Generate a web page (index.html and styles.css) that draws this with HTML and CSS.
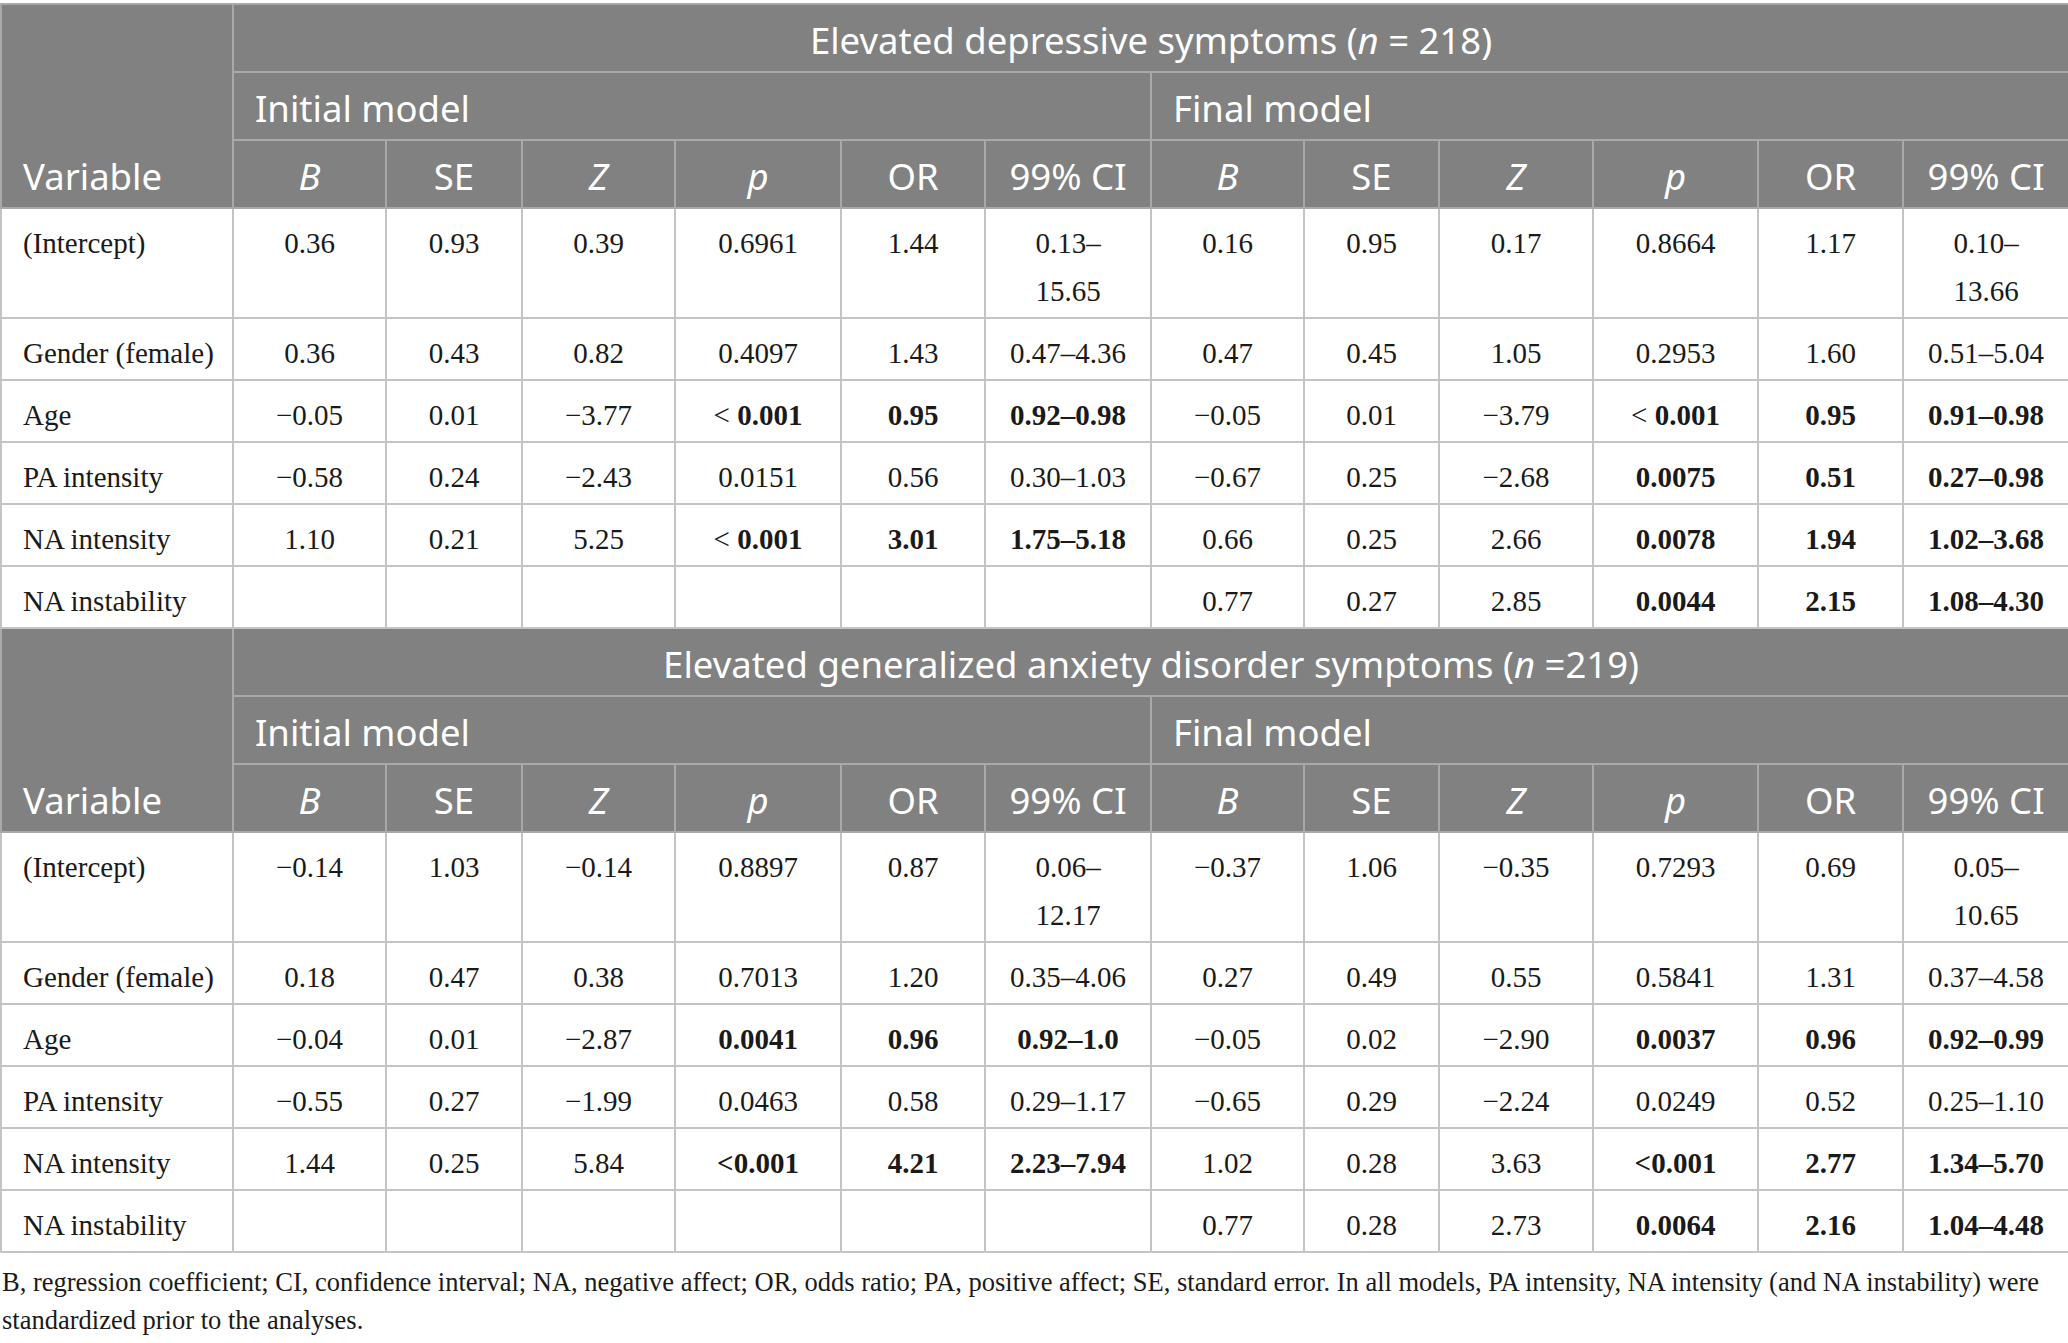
FILE: index.html
```html
<!DOCTYPE html>
<html lang="en">
<head>
<meta charset="utf-8">
<title>Table</title>
<link rel="stylesheet" href="styles.css">
</head>
<body>
<table class="t">
<colgroup>
<col style="width:232px"><col style="width:153px"><col style="width:136px"><col style="width:153px"><col style="width:166px"><col style="width:144px"><col style="width:166px"><col style="width:153px"><col style="width:135px"><col style="width:154px"><col style="width:165px"><col style="width:145px"><col style="width:166px">
</colgroup>
<tbody>
<tr class="hr">
<th class="h var" rowspan="3">Variable</th>
<th class="h title" colspan="12">Elevated depressive symptoms (<i>n</i> = 218)</th>
</tr>
<tr class="hr">
<th class="h model" colspan="6">Initial model</th>
<th class="h model" colspan="6">Final model</th>
</tr>
<tr class="hr">
<th class="h c"><i>B</i></th><th class="h c">SE</th><th class="h c"><i>Z</i></th><th class="h c"><i>p</i></th><th class="h c">OR</th><th class="h c">99% CI</th>
<th class="h c"><i>B</i></th><th class="h c">SE</th><th class="h c"><i>Z</i></th><th class="h c"><i>p</i></th><th class="h c">OR</th><th class="h c">99% CI</th>
</tr>
<tr>
<td class="v">(Intercept)</td><td>0.36</td><td>0.93</td><td>0.39</td><td>0.6961</td><td>1.44</td><td>0.13–<br>15.65</td>
<td>0.16</td><td>0.95</td><td>0.17</td><td>0.8664</td><td>1.17</td><td>0.10–<br>13.66</td>
</tr>
<tr>
<td class="v">Gender (female)</td><td>0.36</td><td>0.43</td><td>0.82</td><td>0.4097</td><td>1.43</td><td>0.47–4.36</td>
<td>0.47</td><td>0.45</td><td>1.05</td><td>0.2953</td><td>1.60</td><td>0.51–5.04</td>
</tr>
<tr>
<td class="v">Age</td><td>−0.05</td><td>0.01</td><td>−3.77</td><td>&lt; <b>0.001</b></td><td><b>0.95</b></td><td><b>0.92–0.98</b></td>
<td>−0.05</td><td>0.01</td><td>−3.79</td><td>&lt; <b>0.001</b></td><td><b>0.95</b></td><td><b>0.91–0.98</b></td>
</tr>
<tr>
<td class="v">PA intensity</td><td>−0.58</td><td>0.24</td><td>−2.43</td><td>0.0151</td><td>0.56</td><td>0.30–1.03</td>
<td>−0.67</td><td>0.25</td><td>−2.68</td><td><b>0.0075</b></td><td><b>0.51</b></td><td><b>0.27–0.98</b></td>
</tr>
<tr>
<td class="v">NA intensity</td><td>1.10</td><td>0.21</td><td>5.25</td><td>&lt; <b>0.001</b></td><td><b>3.01</b></td><td><b>1.75–5.18</b></td>
<td>0.66</td><td>0.25</td><td>2.66</td><td><b>0.0078</b></td><td><b>1.94</b></td><td><b>1.02–3.68</b></td>
</tr>
<tr>
<td class="v">NA instability</td><td></td><td></td><td></td><td></td><td></td><td></td>
<td>0.77</td><td>0.27</td><td>2.85</td><td><b>0.0044</b></td><td><b>2.15</b></td><td><b>1.08–4.30</b></td>
</tr>
<tr class="hr">
<th class="h var" rowspan="3">Variable</th>
<th class="h title" colspan="12">Elevated generalized anxiety disorder symptoms (<i>n</i> =219)</th>
</tr>
<tr class="hr">
<th class="h model" colspan="6">Initial model</th>
<th class="h model" colspan="6">Final model</th>
</tr>
<tr class="hr">
<th class="h c"><i>B</i></th><th class="h c">SE</th><th class="h c"><i>Z</i></th><th class="h c"><i>p</i></th><th class="h c">OR</th><th class="h c">99% CI</th>
<th class="h c"><i>B</i></th><th class="h c">SE</th><th class="h c"><i>Z</i></th><th class="h c"><i>p</i></th><th class="h c">OR</th><th class="h c">99% CI</th>
</tr>
<tr>
<td class="v">(Intercept)</td><td>−0.14</td><td>1.03</td><td>−0.14</td><td>0.8897</td><td>0.87</td><td>0.06–<br>12.17</td>
<td>−0.37</td><td>1.06</td><td>−0.35</td><td>0.7293</td><td>0.69</td><td>0.05–<br>10.65</td>
</tr>
<tr>
<td class="v">Gender (female)</td><td>0.18</td><td>0.47</td><td>0.38</td><td>0.7013</td><td>1.20</td><td>0.35–4.06</td>
<td>0.27</td><td>0.49</td><td>0.55</td><td>0.5841</td><td>1.31</td><td>0.37–4.58</td>
</tr>
<tr>
<td class="v">Age</td><td>−0.04</td><td>0.01</td><td>−2.87</td><td><b>0.0041</b></td><td><b>0.96</b></td><td><b>0.92–1.0</b></td>
<td>−0.05</td><td>0.02</td><td>−2.90</td><td><b>0.0037</b></td><td><b>0.96</b></td><td><b>0.92–0.99</b></td>
</tr>
<tr>
<td class="v">PA intensity</td><td>−0.55</td><td>0.27</td><td>−1.99</td><td>0.0463</td><td>0.58</td><td>0.29–1.17</td>
<td>−0.65</td><td>0.29</td><td>−2.24</td><td>0.0249</td><td>0.52</td><td>0.25–1.10</td>
</tr>
<tr>
<td class="v">NA intensity</td><td>1.44</td><td>0.25</td><td>5.84</td><td><b>&lt;0.001</b></td><td><b>4.21</b></td><td><b>2.23–7.94</b></td>
<td>1.02</td><td>0.28</td><td>3.63</td><td><b>&lt;0.001</b></td><td><b>2.77</b></td><td><b>1.34–5.70</b></td>
</tr>
<tr>
<td class="v">NA instability</td><td></td><td></td><td></td><td></td><td></td><td></td>
<td>0.77</td><td>0.28</td><td>2.73</td><td><b>0.0064</b></td><td><b>2.16</b></td><td><b>1.04–4.48</b></td>
</tr>
</tbody>
</table>
<p class="note">B, regression coefficient; CI, confidence interval; NA, negative affect; OR, odds ratio; PA, positive affect; SE, standard error. In all models, PA intensity, NA intensity (and NA instability) were standardized prior to the analyses.</p>
</body>
</html>
```
FILE: styles.css
```css
html, body {
  margin: 0;
  padding: 0;
  background: #ffffff;
}
body {
  padding-top: 3px;
  width: 2068px;
}
.t {
  border-collapse: collapse;
  table-layout: fixed;
  width: 2068px;
}
.t td, .t th {
  border: 2px solid #c4c4c4;
  white-space: nowrap;
  overflow: hidden;
}
.t th.h {
  background: #808180;
  color: #ffffff;
  font-family: "Noto Sans", "Open Sans", sans-serif;
  font-size: 36.5px;
  font-weight: 400;
  line-height: 48px;
  padding: 11px 21px 7px;
  border-color: #a8a9a8;
  text-align: left;
  vertical-align: middle;
}
.t th.h i {
  font-style: italic;
}
.t th.var {
  vertical-align: bottom;
}
.t th.title {
  text-align: center;
  padding-left: 0;
  padding-right: 0;
}
.t th.c {
  text-align: center;
  padding-left: 4px;
  padding-right: 4px;
}
.t td {
  font-family: "Liberation Serif", "Times New Roman", serif;
  font-size: 29px;
  line-height: 48px;
  color: #1a1a1a;
  padding: 10px 4px 2px;
  text-align: center;
  vertical-align: top;
}
.t td.v {
  text-align: left;
  padding-left: 21px;
}
.t td b {
  font-weight: 700;
}
.note {
  margin: 10px 0 0 2px;
  font-family: "Liberation Serif", "Times New Roman", serif;
  font-size: 26.5px;
  line-height: 38px;
  color: #1a1a1a;
  width: 2050px;
}
```
